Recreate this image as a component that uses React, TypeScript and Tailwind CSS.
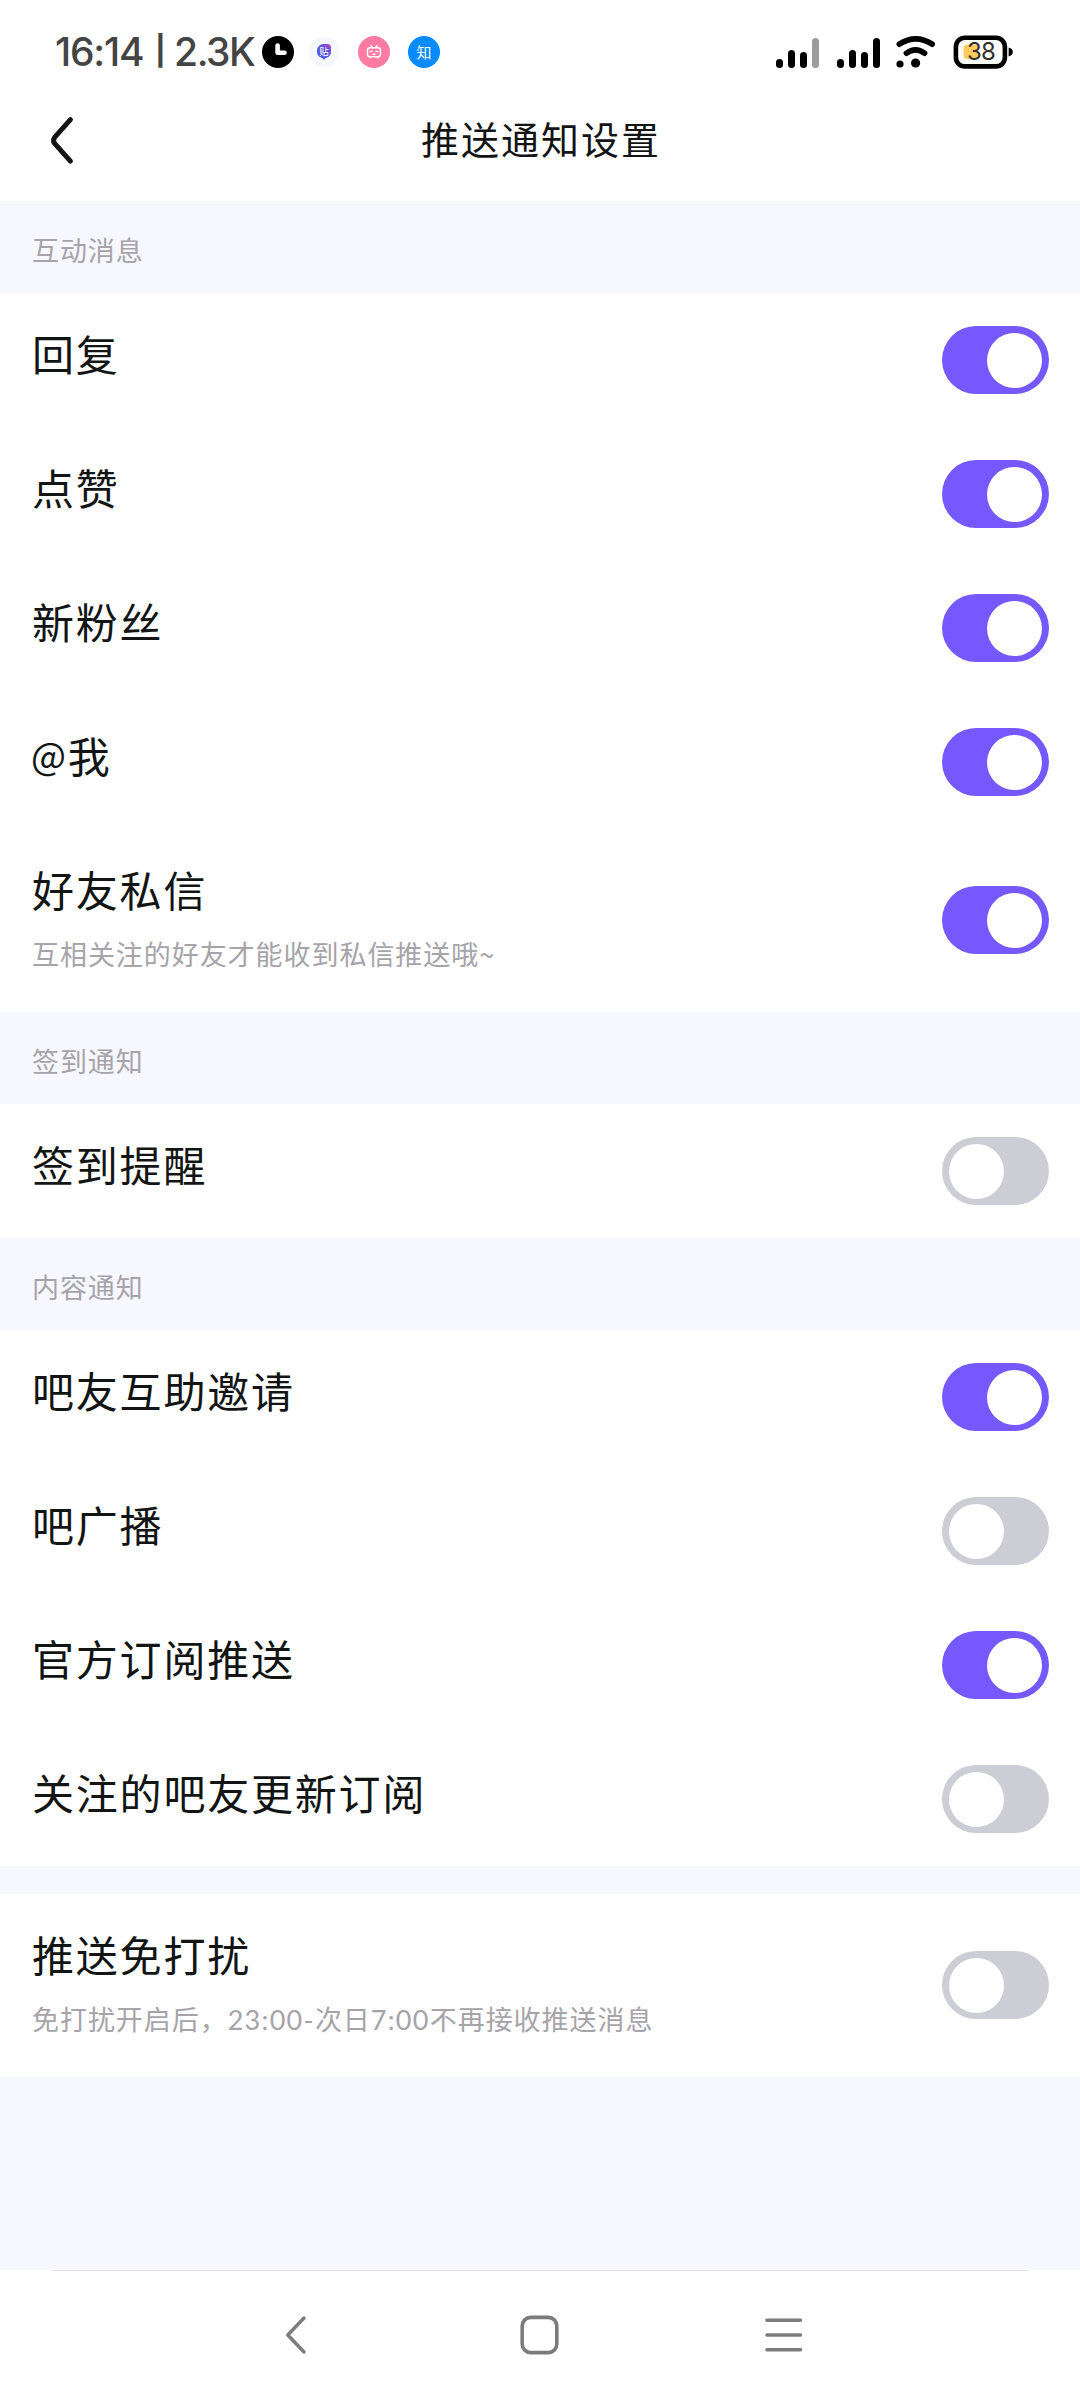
import React, { useState } from "react";

type SettingItem = {
  id: string;
  label: string;
  hint?: string;
  on: boolean;
};

type SettingGroup = {
  title?: string;
  items: SettingItem[];
};

const GROUPS: SettingGroup[] = [
  {
    title: "互动消息",
    items: [
      { id: "reply", label: "回复", on: true },
      { id: "like", label: "点赞", on: true },
      { id: "fans", label: "新粉丝", on: true },
      { id: "at", label: "@我", on: true },
      { id: "dm", label: "好友私信", hint: "互相关注的好友才能收到私信推送哦~", on: true },
    ],
  },
  {
    title: "签到通知",
    items: [{ id: "sign", label: "签到提醒", on: false }],
  },
  {
    title: "内容通知",
    items: [
      { id: "invite", label: "吧友互助邀请", on: true },
      { id: "broadcast", label: "吧广播", on: false },
      { id: "official", label: "官方订阅推送", on: true },
      { id: "follow", label: "关注的吧友更新订阅", on: false },
    ],
  },
  {
    items: [
      { id: "dnd", label: "推送免打扰", hint: "免打扰开启后，23:00-次日7:00不再接收推送消息", on: false },
    ],
  },
];

// ── Status bar ──────────────────────────────────────────────────────────────
function Signal({ weak = false }: { weak?: boolean }) {
  return (
    <svg width="43" height="32" viewBox="0 0 43 32" className="shrink-0">
      <rect x="0" y="23" width="7" height="9" rx="3.5" />
      <rect x="12" y="14" width="7" height="18" rx="3.5" />
      <rect x="24" y="16" width="7" height="16" rx="3.5" />
      <rect x="36" y="2" width="7" height="30" rx="3.5" fill={weak ? "#9d9b9d" : "#000"} />
    </svg>
  );
}

function Wifi() {
  return (
    <svg width="40" height="34" viewBox="0 0 40 34" className="ml-[16px] shrink-0">
      <g fill="none" stroke="#000" strokeWidth="5.6" strokeLinecap="round">
        <path d="M3.3 9.2Q19.7 -1.6 36.2 9.2" />
        <path d="M10.4 18.2Q19.5 11.6 28.6 18.2" />
      </g>
      <circle cx="4" cy="29" r="3.6" />
      <circle cx="19.6" cy="28" r="4.6" />
    </svg>
  );
}

function Battery() {
  return (
    <div className="relative ml-[17px] h-[34px] w-[61px] shrink-0">
      <svg width="61" height="34" viewBox="0 0 61 34" className="block">
        <rect x="2.9" y="2.8" width="49" height="28.6" rx="9" fill="#fff" stroke="#000" strokeWidth="4.6" />
        <path d="M55.6 12.6Q59.8 13.6 59.8 17T55.6 21.6Z" />
        <rect x="10.5" y="9.5" width="15" height="14.5" rx="4" fill="#ffcb5c" />
      </svg>
      <span className="absolute left-[14px] top-[5px] font-['Inter'] text-[24px] leading-[24px] tracking-[-0.9px] text-[#33302c]">
        38
      </span>
    </div>
  );
}

function StatusBar() {
  return (
    <div className="flex h-[79px] items-center justify-between pt-[25px] pr-[66px] pl-[55px]">
      <div className="flex items-center">
        <div className="flex w-[207px] items-center font-['Inter'] text-[39px] font-medium leading-[32px] text-[#444]">
          <span className="w-[100px] tracking-[-1.2px]">16:14</span>
          <span className="w-[19px] -translate-y-px text-[29px] font-bold">|</span>
          <span className="tracking-[-1.4px]">2.3K</span>
        </div>
        <svg width="32" height="32" viewBox="0 0 32 32">
          <circle cx="16" cy="16" r="16" />
          <path d="M15.6 9.6V16.8H22.5" fill="none" stroke="#fff" strokeWidth="4.6" strokeLinecap="round" strokeLinejoin="round" />
        </svg>
        <svg width="30" height="30" viewBox="0 0 30 30" className="ml-[15px]">
          <defs>
            <linearGradient id="bubble" x1="0" y1="1" x2="1" y2="0">
              <stop offset="0.1" stopColor="#4657e0" />
              <stop offset="0.75" stopColor="#6a50dc" />
              <stop offset="1" stopColor="#f0408c" />
            </linearGradient>
          </defs>
          <circle cx="15" cy="15" r="15" fill="#f6f8ff" />
          <path d="M14.5 7H18.5Q22 7 22 10.5V14.5A7 7 0 0 1 16.4 21.2L15 23L13.6 21.2A7 7 0 0 1 8 14.5V13.5A6.5 6.5 0 0 1 14.5 7Z" fill="url(#bubble)" />
          <text x="15" y="18" textAnchor="middle" fontSize="9.5" fill="#fff" className="font-['Noto_Sans_CJK_SC']">
            贴
          </text>
        </svg>
        <svg width="32" height="32" viewBox="0 0 32 32" className="ml-[19px]">
          <circle cx="16" cy="16" r="16" fill="#ff7ba4" />
          <g fill="none" stroke="#fff" strokeWidth="1.4" strokeLinecap="round">
            <rect x="9.5" y="11.8" width="13" height="9" rx="2.6" />
            <path d="M13 9.6L14.6 11.8M19 9.6L17.4 11.8M12 15.6L14 15.2M18 15.2L20 15.6M15 18.2H17M12 21.6V22M20 21.6V22" />
          </g>
        </svg>
        <div className="ml-[18px] flex size-[32px] items-center justify-center rounded-full bg-[#088bff] pb-px font-['Noto_Sans_CJK_SC'] text-[15px] leading-none text-white">
          知
        </div>
      </div>
      <div className="flex items-center">
        <Signal weak />
        <div className="w-[18px]" />
        <Signal />
        <Wifi />
        <Battery />
      </div>
    </div>
  );
}

// ── Header ──────────────────────────────────────────────────────────────────
function Header() {
  return (
    <div className="grid h-[122px] grid-cols-[1fr_auto_1fr] items-center">
      <button className="ml-[49px] w-[26px]" aria-label="返回">
        <svg width="26" height="50" viewBox="0 0 26 50" fill="none" stroke="#121514" strokeWidth="5" strokeLinecap="round" strokeLinejoin="round">
          <path d="M21.4 4.6L5.6 22.4Q3.4 25.4 5.6 28.4L21.4 46.2" />
        </svg>
      </button>
      <h1 className="-mr-[2px] pb-[5px] text-[38px] leading-[56px] tracking-[2px] text-[#121514]">推送通知设置</h1>
    </div>
  );
}

// ── Settings list ───────────────────────────────────────────────────────────
function Toggle({ on, onChange }: { on: boolean; onChange: () => void }) {
  return (
    <button
      role="switch"
      aria-checked={on}
      onClick={onChange}
      className={`flex h-[68px] w-[107px] shrink-0 items-center rounded-full px-[7px] ${
        on ? "justify-end bg-[#7559ff]" : "justify-start bg-[#cdcdd6]"
      }`}
    >
      <span className="size-[55px] rounded-full bg-white" />
    </button>
  );
}

function Label({ text }: { text: string }) {
  // the @ sign sits a bit smaller next to the hanzi
  const at = text.startsWith("@");
  return (
    <div className="h-[60px] text-[42px] leading-[60px] tracking-[1.8px] text-[#121514]">
      {at && (
        <span className="inline-block -translate-x-px -translate-y-[3px] text-[37px] leading-none tracking-[0.8px]">@</span>
      )}
      {at ? text.slice(1) : text}
    </div>
  );
}

function Hint({ text }: { text: string }) {
  return (
    <div className="mt-[15px] h-[40px] text-[27px] leading-[40px] tracking-[0.95px] text-[#a6a3a9]">
      {text.split(/([\d:-]+)/).map((part, i) =>
        i % 2 ? (
          <span key={i} className="font-['Lato'] tracking-[1.3px]">
            {part}
          </span>
        ) : (
          part
        )
      )}
    </div>
  );
}

function SettingRow({ item, on, onToggle }: { item: SettingItem; on: boolean; onToggle: () => void }) {
  return (
    <div
      className={`flex items-center justify-between bg-white pr-[31px] pl-[32px] ${
        item.hint ? "h-[183px] pb-px" : "h-[134px]"
      }`}
    >
      <div className={item.hint ? "pb-[8px]" : "pb-[14px]"}>
        <Label text={item.label} />
        {item.hint && <Hint text={item.hint} />}
      </div>
      <Toggle on={on} onChange={onToggle} />
    </div>
  );
}

function NavBar() {
  return (
    <div className="flex h-[130px] flex-col items-center bg-white">
      <div className="h-px w-[976px] bg-[#e4e6ec]" />
      <div className="flex w-full flex-1 items-center pb-px pl-[284px]">
        <svg width="24" height="40" viewBox="0 0 24 40" fill="none" stroke="#7c7c7c" strokeWidth="3.4" strokeLinecap="round" strokeLinejoin="round">
          <path d="M20 3L3.8 20L20 37" />
        </svg>
        <svg width="40" height="40" viewBox="0 0 40 40" className="ml-[212px]" fill="none" stroke="#7c7c7c" strokeWidth="3.6">
          <rect x="2.2" y="2.4" width="34.6" height="35.2" rx="8.5" />
        </svg>
        <svg width="38" height="40" viewBox="0 0 38 40" className="ml-[205px]" fill="none" stroke="#7c7c7c" strokeWidth="3.6" strokeLinecap="round">
          <path d="M2 5.2H35.4M2 20H35.4M2 34.8H35.4" />
        </svg>
      </div>
    </div>
  );
}

export default function App() {
  const [state, setState] = useState<Record<string, boolean>>(() =>
    Object.fromEntries(GROUPS.flatMap((g) => g.items).map((i) => [i.id, i.on]))
  );

  const toggle = (id: string) => setState((prev) => ({ ...prev, [id]: !prev[id] }));

  return (
    <div className="flex h-[2400px] w-[1080px] flex-col overflow-hidden bg-[#f7f7ff] font-['Noto_Sans_CJK_SC',sans-serif]">
      <div className="bg-white">
        <StatusBar />
        <Header />
      </div>

      <div className="flex-1">
        {GROUPS.map((group, i) => (
          <section key={i}>
            {group.title ? (
              <div className="flex h-[92px] items-center pt-[6px] pl-[32px] text-[27px] leading-[40px] tracking-[0.9px] text-[#a6a3a9]">
                {group.title}
              </div>
            ) : (
              <div className="h-[28px]" />
            )}
            {group.items.map((item) => (
              <SettingRow key={item.id} item={item} on={state[item.id]} onToggle={() => toggle(item.id)} />
            ))}
          </section>
        ))}
      </div>

      <NavBar />
    </div>
  );
}
